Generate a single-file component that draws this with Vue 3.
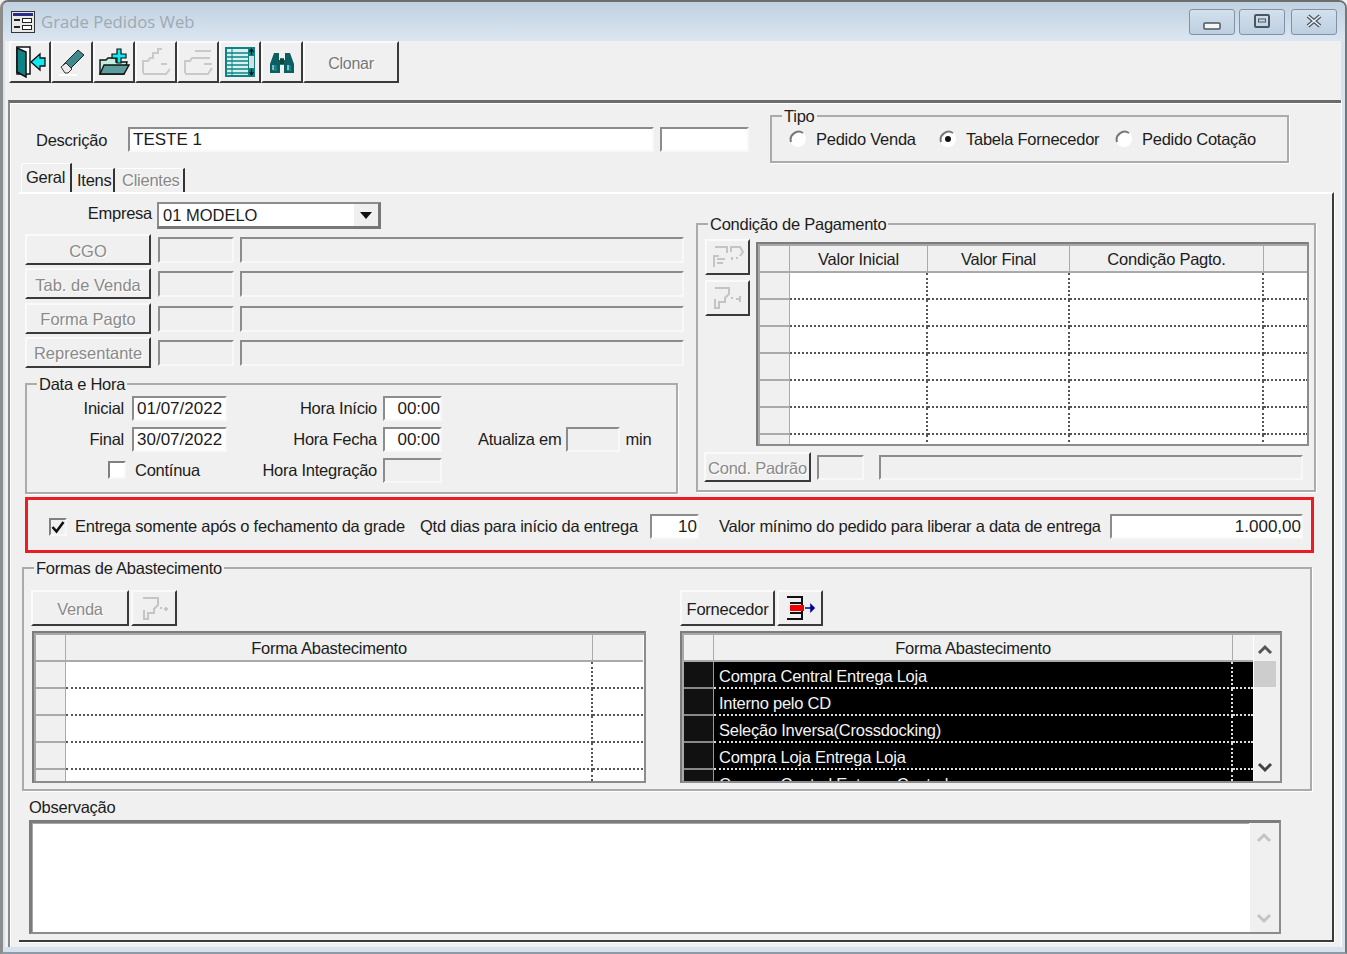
<template>
  <div class="window">
    <header class="titlebar">
      <svg class="app-icon" width="24" height="22" viewBox="0 0 24 22">
        <rect x="0.5" y="0.5" width="23" height="21" fill="#e8e8e8" stroke="#333" />
        <rect x="2" y="2" width="20" height="3" fill="#2a2a8a" />
        <path d="M3 9h6M3 16h6" stroke="#222" stroke-width="2" />
        <rect x="11.5" y="7.5" width="9" height="4" fill="#fff" stroke="#222" />
        <rect x="11.5" y="14.5" width="9" height="4" fill="#fff" stroke="#222" />
      </svg>
      <span class="title">Grade Pedidos Web</span>
      <div class="caption-buttons">
        <div class="caption-btn">
          <svg width="18" height="10" viewBox="0 0 18 10"><rect x="1" y="2" width="16" height="6" rx="1" fill="#f4f6f8" stroke="#4a5560" stroke-width="1.5" /></svg>
        </div>
        <div class="caption-btn up">
          <svg width="18" height="14" viewBox="0 0 18 14"><rect x="2" y="1" width="14" height="12" rx="1" fill="none" stroke="#4a5560" stroke-width="2" /><rect x="5.5" y="5" width="7" height="3" fill="none" stroke="#4a5560" /></svg>
        </div>
        <div class="caption-btn up close">
          <svg width="18" height="14" viewBox="0 0 18 14"><path d="M3 2l12 10M15 2L3 12" stroke="#4a5560" stroke-width="4" /><path d="M3 2l12 10M15 2L3 12" stroke="#eef2f6" stroke-width="1.6" /></svg>
        </div>
      </div>
    </header>

    <div class="client">
      <div class="toolbar">
        <button class="btn tool">
          <svg width="32" height="32" viewBox="0 0 32 32">
            <path d="M3 1h13v27H3z" fill="#fff" stroke="#111" stroke-width="1.5" />
            <path d="M3 2l9 4v25L3 26z" fill="#0f8285" stroke="#111" stroke-width="1.5" />
            <path d="M17 16l9-8v4h5v8h-5v4z" fill="#12e8f0" stroke="#111" stroke-width="1.3" />
          </svg>
        </button>
        <button class="btn tool">
          <svg width="30" height="30" viewBox="0 0 30 30">
            <path d="M6 18L21 3l6 5-15 15z" fill="#3e8a8c" stroke="#222" />
            <path d="M4 20l5-4 6 6-4 4H8z" fill="#ececec" stroke="#333" />
            <path d="M2 28h18" stroke="#fff" stroke-width="2" />
          </svg>
        </button>
        <button class="btn tool">
          <svg width="32" height="30" viewBox="0 0 32 30">
            <path d="M2 27V13h6l2-2h8v4h11l-3 12z" fill="#c4ece0" stroke="#111" stroke-width="1.4" />
            <path d="M2 27l4-9h25l-5 9z" fill="#5b9c9c" stroke="#111" stroke-width="1.4" />
            <path d="M14 7h5V2h4v5h5v4h-5v5h-4v-5h-5z" fill="#12e8f0" stroke="#111" stroke-width="1.2" />
          </svg>
        </button>
        <button class="btn tool">
          <svg width="32" height="30" viewBox="0 0 32 30">
            <path d="M3 26V14h5l2-3h3V6h5V2h4M27 17h-6M30 22l-4 5H3" fill="none" stroke="#c9c9c9" stroke-width="2" />
          </svg>
        </button>
        <button class="btn tool">
          <svg width="32" height="30" viewBox="0 0 32 30">
            <path d="M3 26V14h5l2-3h18M13 4h16M30 17h-8M30 21l-4 6H3" fill="none" stroke="#c9c9c9" stroke-width="2" />
          </svg>
        </button>
        <button class="btn tool">
          <svg width="32" height="32" viewBox="0 0 32 32">
            <rect x="1" y="1" width="30" height="30" fill="#0f8285" />
            <rect x="3" y="3" width="21" height="26" fill="#d7f1ef" />
            <path d="M3 7h21M3 11h21M3 15h21M3 19h21M3 23h21M3 27h21" stroke="#0f8285" stroke-width="1.4" />
            <path d="M8 3v26" stroke="#0f8285" />
            <rect x="25" y="10" width="5" height="12" fill="#ddd" />
            <path d="M27.5 3v6M25.5 6l2-3 2 3M27.5 23v6M25.5 26l2 3 2-3" stroke="#111" fill="none" stroke-width="1.2" />
          </svg>
        </button>
        <button class="btn tool">
          <svg width="26" height="24" viewBox="0 0 26 24">
            <path d="M5 3h5v7h1v13H1v-9zM21 3h-5v7h-1v13h10v-9z" fill="#0b5f62" />
            <path d="M11 8h4v7h-4zM4 15h4v6H4zM18 15h4v6h-4z" fill="#0f8285" />
            <path d="M11 9h4v5h-4z" fill="#143" />
            <path d="M4 15v5M19 15v5" stroke="#fff" />
          </svg>
        </button>
        <button class="btn tool clone">Clonar</button>
      </div>

      <div class="panel">
        <div class="top-row">
          <label class="desc-label">Descrição</label>
          <div class="field desc-input">TESTE 1</div>
          <div class="field desc-code"></div>
          <div class="group tipo">
            <span class="legend">Tipo</span>
            <div class="radio-row">
              <span v-for="r in tipos" :key="r.label" class="radio-item" :style="{ width: r.width + 'px' }">
                <svg width="20" height="20" viewBox="0 0 20 20">
                  <circle cx="10" cy="10" r="8" fill="#fff" />
                  <path d="M3 13A8 8 0 0 1 15 4" fill="none" stroke="#777" stroke-width="2" />
                  <circle v-if="r.checked" cx="10" cy="10" r="3" fill="#111" />
                </svg>
                <span>{{ r.label }}</span>
              </span>
            </div>
          </div>
        </div>

        <div class="tabs">
          <div class="tab active">Geral</div>
          <div class="tab tab-itens">Itens</div>
          <div class="tab tab-clientes">Clientes</div>
        </div>

        <div class="tab-page">
          <div class="upper">
            <div class="left-col">
              <div class="empresa">
                <label class="empresa-label">Empresa</label>
                <div class="field combo">
                  <span>01 MODELO</span>
                  <span class="combo-btn"><i class="arrow"></i></span>
                </div>
              </div>

              <div class="lookup-grid">
                <template v-for="name in lookups" :key="name">
                  <button class="btn off">{{ name }}</button>
                  <div class="field disabled"></div>
                  <div class="field disabled"></div>
                </template>
              </div>

              <div class="group data-hora">
                <span class="legend">Data e Hora</span>
                <div class="dh-grid">
                  <label class="right short">Inicial</label>
                  <div class="field">01/07/2022</div>
                  <label class="right">Hora Início</label>
                  <div class="field time">00:00</div>
                  <div></div>

                  <label class="right short">Final</label>
                  <div class="field">30/07/2022</div>
                  <label class="right">Hora Fecha</label>
                  <div class="field time">00:00</div>
                  <div class="atualiza">
                    <span>Atualiza em</span>
                    <div class="field disabled minutes"></div>
                    <span>min</span>
                  </div>

                  <div class="continua">
                    <span class="check"></span>
                    <span>Contínua</span>
                  </div>
                  <label class="right">Hora Integração</label>
                  <div class="field disabled"></div>
                  <div></div>
                </div>
              </div>
            </div>

            <div class="group condicao">
              <span class="legend">Condição de Pagamento</span>
              <div class="cond-main">
                <div class="cond-btns">
                  <button class="btn icon-btn">
                    <svg width="32" height="26" viewBox="0 0 32 26"><path d="M2 23V12h5M3 3h12v6M5 15h8M5 19h6M19 8V3h9l3 5-3 4M20 16v-3M24 14h2" fill="none" stroke="#c4c4c4" stroke-width="2" /></svg>
                  </button>
                  <button class="btn icon-btn">
                    <svg width="32" height="26" viewBox="0 0 32 26"><path d="M3 3h14v6l-4 4v4H7v6H3v-9M20 12v2M24 14h5M28 11v6" fill="none" stroke="#c4c4c4" stroke-width="2" /></svg>
                  </button>
                </div>
                <div class="dbgrid cond-grid">
                  <div class="grid-row head" :style="{ gridTemplateColumns: condCols }">
                    <div v-for="(c, i) in condHead" :key="i" class="cell">{{ c }}</div>
                  </div>
                  <div v-for="n in 7" :key="n" class="grid-row" :style="{ gridTemplateColumns: condCols }">
                    <div v-for="(c, i) in condHead" :key="i" class="cell"></div>
                  </div>
                </div>
              </div>
              <div class="cond-foot">
                <button class="btn off padrao">Cond. Padrão</button>
                <div class="field disabled padrao-code"></div>
                <div class="field disabled padrao-name"></div>
              </div>
            </div>
          </div>

          <div class="highlight">
            <span class="check checked">
              <svg width="14" height="14" viewBox="0 0 14 14"><path d="M1.5 7l4 4.5L12.5 2" fill="none" stroke="#111" stroke-width="2.6" /></svg>
            </span>
            <span class="hl-entrega">Entrega somente após o fechamento da grade</span>
            <span class="hl-qtd">Qtd dias para início da entrega</span>
            <div class="field num qtd">10</div>
            <span class="hl-valor">Valor mínimo do pedido para liberar a data de entrega</span>
            <div class="field num valor">1.000,00</div>
          </div>

          <div class="group formas">
            <span class="legend">Formas de Abastecimento</span>
            <div class="formas-body">
              <div class="formas-side left-side">
                <div class="formas-btns">
                  <button class="btn off venda">Venda</button>
                  <button class="btn icon-small">
                    <svg width="30" height="26" viewBox="0 0 30 26"><path d="M4 3h15v7l-4 4v4H9v6H5v-9M22 12v2M25 14h4M27 12v4" fill="none" stroke="#c4c4c4" stroke-width="2" /></svg>
                  </button>
                </div>
                <div class="dbgrid forma-grid">
                  <div class="grid-row head" :style="{ gridTemplateColumns: leftCols }">
                    <div class="cell"></div><div class="cell">Forma Abastecimento</div><div class="cell"></div>
                  </div>
                  <div v-for="n in 5" :key="n" class="grid-row" :style="{ gridTemplateColumns: leftCols }">
                    <div class="cell"></div><div class="cell"></div><div class="cell"></div>
                  </div>
                </div>
              </div>

              <div class="formas-side right-side">
                <div class="formas-btns">
                  <button class="btn fornecedor">Fornecedor</button>
                  <button class="btn icon-small">
                    <svg width="32" height="26" viewBox="0 0 32 26">
                      <path d="M3 2h15v22H3M18 2v6H6M18 24v-6H6" fill="none" stroke="#111" stroke-width="2" />
                      <rect x="6" y="10" width="14" height="6" fill="#f00000" />
                      <path d="M21 13h9M27 10l3 3-3 3z" fill="#0000a0" stroke="#0000a0" stroke-width="1.6" />
                    </svg>
                  </button>
                </div>
                <div class="dbgrid forma-grid selected">
                  <div class="grid-body">
                    <div class="grid-row head" :style="{ gridTemplateColumns: rightCols }">
                      <div class="cell"></div><div class="cell">Forma Abastecimento</div><div class="cell"></div>
                    </div>
                    <div v-for="f in formas" :key="f" class="grid-row" :style="{ gridTemplateColumns: rightCols }">
                      <div class="cell"></div><div class="cell text">{{ f }}</div><div class="cell"></div>
                    </div>
                  </div>
                  <div class="scrollbar">
                    <svg width="16" height="12" viewBox="0 0 16 12"><path d="M2 10l6-6 6 6" fill="none" stroke="#555" stroke-width="3" /></svg>
                    <div class="thumb"></div>
                    <div class="spacer"></div>
                    <svg width="16" height="12" viewBox="0 0 16 12"><path d="M2 2l6 6 6-6" fill="none" stroke="#444" stroke-width="3" /></svg>
                  </div>
                </div>
              </div>
            </div>
          </div>

          <label class="obs-label">Observação</label>
          <div class="field obs">
            <div class="obs-text"></div>
            <div class="scrollbar">
              <svg width="16" height="12" viewBox="0 0 16 12"><path d="M2 10l6-6 6 6" fill="none" stroke="#c4c4c4" stroke-width="3" /></svg>
              <div class="spacer"></div>
              <svg width="16" height="12" viewBox="0 0 16 12"><path d="M2 2l6 6 6-6" fill="none" stroke="#c4c4c4" stroke-width="3" /></svg>
            </div>
          </div>
        </div>
      </div>
    </div>
  </div>
</template>

<script setup>
const tipos = [
  { label: 'Pedido Venda', width: 150, checked: false },
  { label: 'Tabela Fornecedor', width: 176, checked: true },
  { label: 'Pedido Cotação', width: 150, checked: false },
]
const lookups = ['CGO', 'Tab. de Venda', 'Forma Pagto', 'Representante']
const condHead = ['', 'Valor Inicial', 'Valor Final', 'Condição Pagto.', '']
const condCols = '30px 138px 142px 194px 44px'
const leftCols = '30px 527px 50px'
const rightCols = '30px 519px 20px'
const formas = [
  'Compra Central Entrega Loja',
  'Interno pelo CD',
  'Seleção Inversa(Crossdocking)',
  'Compra Loja Entrega Loja',
  'Compra Central Entrega Central',
]
</script>

<style>
html, body {
  margin: 0;
  background: #f0f0f0;
}
</style>

<style scoped>
.window {
  width: 1347px;
  height: 954px;
  box-sizing: border-box;
  display: flex;
  flex-direction: column;
  padding: 0 4px 5px 2px;
  border-top: 2px solid #6e6e6e;
  border-left: 3px solid #8c8c8c;
  border-right: 2px solid #777;
  border-bottom: 2px solid #8f9aa5;
  border-radius: 8px 8px 0 0;
  background: #d6e3ef;
  font-family: "Liberation Sans", Arial, sans-serif;
  font-size: 16.5px;
  letter-spacing: -0.25px;
  color: #1c1c1c;
  overflow: hidden;
}

.titlebar {
  height: 39px;
  flex: none;
  display: flex;
  align-items: center;
  margin: 0 -4px 0 -2px;
  padding: 0 8px;
  background: linear-gradient(#c0d1e1, #dbe6f1);
}
.title {
  margin-left: 6px;
  font-family: "Open Sans", sans-serif;
  font-size: 16.7px;
  letter-spacing: 0;
  color: #9ea9b3;
}
.caption-buttons {
  margin-left: auto;
  display: flex;
  gap: 4px;
}
.caption-btn {
  width: 46px;
  height: 26px;
  border: 1px solid #7f92a6;
  border-radius: 3px;
  box-sizing: border-box;
  display: flex;
  align-items: flex-end;
  justify-content: center;
  padding-bottom: 3px;
  background: linear-gradient(#d4e0ec, #bccfe1);
}
.caption-btn.up {
  align-items: center;
  padding-bottom: 2px;
}
.caption-btn.close {
  margin-left: 2px;
}

.client {
  flex: 1;
  min-height: 0;
  display: flex;
  flex-direction: column;
  background: #f0f0f0;
}
.toolbar {
  display: flex;
  height: 43px;
  padding-left: 4px;
  flex: none;
}
.btn {
  box-sizing: border-box;
  margin: 0;
  padding: 0;
  font: inherit;
  letter-spacing: inherit;
  color: inherit;
  background: #f0f0f0;
  border: 2px solid;
  border-color: #fafafa #3a3a3a #3a3a3a #fafafa;
  display: flex;
  align-items: center;
  justify-content: center;
}
.tool {
  width: 42px;
  height: 42px;
}
.clone {
  width: 96px;
  padding-top: 3px;
  color: #777;
  font-size: 16px;
  text-shadow: 1px 1px 0 #fff;
}
.off {
  padding-top: 3px;
  color: #8a8a8a;
  text-shadow: 1px 1px 0 #fff;
}

.panel {
  flex: 1;
  min-height: 0;
  margin: 16px 0 0 3px;
  border-top: 3px solid #6c6c6c;
  border-left: 2px solid #8a8a8a;
  box-shadow: inset 1px 1px 0 #fff, 1px 0 0 #fff;
  display: flex;
  flex-direction: column;
  padding-left: 9px;
}
.top-row {
  height: 60px;
  flex: none;
  display: flex;
  align-items: flex-start;
}
.desc-label {
  width: 109px;
  margin-top: 28px;
  padding-left: 17px;
  box-sizing: border-box;
}
.field {
  box-sizing: border-box;
  height: 25px;
  padding: 0 3px;
  display: flex;
  align-items: center;
  background: #fff;
  border: 2px solid;
  border-color: #8c8c8c #f8f8f8 #f8f8f8 #8c8c8c;
  white-space: nowrap;
  line-height: 1;
  font-size: 17px;
  letter-spacing: 0;
}
.disabled {
  background: #f0f0f0;
}
.desc-input {
  width: 526px;
  margin-top: 24px;
}
.desc-code {
  width: 89px;
  margin: 24px 0 0 6px;
}

.group {
  position: relative;
  box-sizing: border-box;
  border: 2px solid #ababab;
  box-shadow: 1px 1px 0 #fff;
}
.legend {
  position: absolute;
  top: -11px;
  left: 10px;
  padding: 0 2px;
  background: #f0f0f0;
  line-height: 20px;
  white-space: nowrap;
}
.tipo {
  width: 519px;
  height: 48px;
  margin: 12px 0 0 21px;
}
.radio-row {
  display: flex;
  padding: 12px 0 0 16px;
}
.radio-item {
  display: flex;
  align-items: center;
  gap: 8px;
  white-space: nowrap;
  overflow: hidden;
}

.tabs {
  height: 29px;
  flex: none;
  display: flex;
  align-items: flex-end;
  padding-left: 2px;
}
.tab {
  height: 24px;
  line-height: 23px;
  box-sizing: border-box;
  padding: 0 3px;
  border-right: 2px solid #333;
  border-top: 1px solid #fff;
  margin-right: 2px;
}
.active {
  height: 29px;
  line-height: 27px;
  padding: 0 4px;
  border-left: 1px solid #fff;
  border-radius: 3px 0 0 0;
  width: 51px;
}
.tab-itens {
  width: 41px;
}
.tab-clientes {
  width: 68px;
  color: #888;
  text-shadow: 1px 1px 0 #fff;
  padding-left: 5px;
}

.tab-page {
  flex: 1;
  min-height: 0;
  width: 1315px;
  margin-bottom: 5px;
  box-sizing: border-box;
  border-top: 2px solid #fff;
  border-right: 2px solid #3a3a3a;
  border-bottom: 2px solid #3a3a3a;
  padding: 8px 0 0 6px;
  box-shadow: 1px 0 0 #fff, 0 1px 0 #fff;
}
.upper {
  display: flex;
  gap: 12px;
  height: 290px;
}
.left-col {
  width: 659px;
}
.empresa {
  display: flex;
  align-items: flex-start;
  height: 32px;
}
.empresa-label {
  width: 127px;
  padding-top: 2px;
  text-align: right;
}
.combo {
  width: 224px;
  height: 27px;
  margin-left: 5px;
  justify-content: space-between;
  padding: 0 0 0 4px;
  border-color: #8c8c8c #777 #777 #8c8c8c;
  border-width: 2px 3px 3px 2px;
  font-size: 16.5px;
}
.combo-btn {
  width: 24px;
  height: 100%;
  background: #f0f0f0;
  border-left: 1px solid #fff;
  display: flex;
  align-items: center;
  justify-content: center;
}
.arrow {
  width: 0;
  height: 0;
  border: 6px solid transparent;
  border-top: 7px solid #111;
  border-bottom: 0;
}
.lookup-grid {
  display: grid;
  grid-template-columns: 127px 76px 444px;
  grid-auto-rows: 31px;
  column-gap: 6px;
  row-gap: 3.3px;
}
.lookup-grid .field {
  height: 26px;
  margin-top: 3px;
}
.lookup-grid .btn {
  width: 126px;
  white-space: nowrap;
  letter-spacing: 0;
}
.data-hora {
  width: 653px;
  height: 111px;
  margin: 15px 0 0 0;
}
.dh-grid {
  display: grid;
  grid-template-columns: 105px 95px 156px 59px 1fr;
  grid-auto-rows: 25px;
  row-gap: 6px;
  padding-top: 11px;
  align-items: center;
}
.right {
  text-align: right;
  white-space: nowrap;
  padding-right: 6px;
}
.right.short {
  padding-right: 8px;
}
.time {
  justify-content: flex-end;
  padding-right: 0;
}
.continua {
  grid-column: 1 / 3;
  display: flex;
  align-items: center;
  gap: 9px;
  padding-left: 81px;
}
.check {
  box-sizing: border-box;
  width: 18px;
  height: 18px;
  background: #fff;
  border: 2px solid;
  border-color: #808080 #f8f8f8 #f8f8f8 #808080;
  display: inline-flex;
  align-items: center;
  justify-content: center;
  flex: none;
}
.atualiza {
  display: flex;
  align-items: center;
  padding-left: 36px;
  white-space: nowrap;
}
.minutes {
  width: 54px;
  margin: 0 5px;
  flex: none;
}

.condicao {
  width: 620px;
  height: 269px;
  margin-top: 21px;
  padding: 14px 0 0 7px;
}
.cond-main {
  display: flex;
  gap: 6px;
  height: 213px;
}
.cond-btns {
  display: flex;
  flex-direction: column;
  gap: 5px;
}
.icon-btn {
  width: 45px;
  height: 36px;
}
.dbgrid {
  box-sizing: border-box;
  border: 2px solid;
  border-color: #7c7c7c #8c8c8c #8c8c8c #7c7c7c;
  box-shadow: inset 2px 2px 0 #a8a8a8;
  background: #fff;
  overflow: hidden;
  padding: 2px 0 0 2px;
}
.cond-grid {
  width: 553px;
  height: 204px;
  margin-top: 3px;
}
.grid-row {
  display: grid;
  height: 27px;
}
.cell {
  box-sizing: border-box;
  border-right: 2px dotted #555;
  border-bottom: 2px dotted #555;
  white-space: nowrap;
  overflow: hidden;
}
.cell:first-child {
  background: #f0f0f0;
  border-right: 1px solid #aaa;
  border-bottom: 2px solid #aaa;
}
.cell:last-child {
  border-right: none;
}
.head .cell {
  background: #f0f0f0;
  border-right: 1px solid #aaa;
  border-bottom: 2px solid #aaa;
  text-align: center;
  line-height: 27px;
}
.head .cell:last-child {
  border-right: none;
}
.cond-foot {
  display: flex;
  align-items: center;
  margin-left: -1px;
}
.padrao {
  width: 107px;
  height: 30px;
  white-space: nowrap;
}
.padrao-code {
  width: 47px;
  margin-left: 6px;
}
.padrao-name {
  width: 424px;
  margin-left: 15px;
}

.highlight {
  box-sizing: border-box;
  width: 1289px;
  height: 56px;
  margin-top: 5px;
  border: 3px solid #ed1c24;
  display: flex;
  align-items: center;
  padding: 3px 0 0 21px;
  white-space: nowrap;
}
.checked {
  background: #f0f0f0;
}
.hl-entrega {
  width: 329px;
  margin-left: 8px;
}
.hl-qtd {
  width: 220px;
  margin-left: 16px;
}
.qtd {
  width: 49px;
  margin-left: 10px;
}
.num {
  justify-content: flex-end;
  padding-right: 0;
}
.hl-valor {
  width: 381px;
  margin-left: 20px;
}
.valor {
  width: 193px;
  margin-left: 10px;
}

.formas {
  width: 1290px;
  height: 224px;
  margin: 14px 0 0 -3px;
}
.formas-body {
  display: flex;
  padding: 21px 0 0 7px;
}
.formas-side {
  display: flex;
  flex-direction: column;
}
.left-side {
  width: 649px;
}
.formas-btns {
  display: flex;
  height: 41px;
  gap: 2px;
}
.venda {
  width: 98px;
  height: 36px;
}
.fornecedor {
  width: 95px;
  height: 36px;
  padding-top: 3px;
}
.icon-small {
  width: 46px;
  height: 36px;
}
.forma-grid {
  width: 614px;
  height: 152px;
}
.left-side .forma-grid {
  margin-left: 1px;
}
.selected {
  width: 602px;
  display: flex;
}
.grid-body {
  width: 569px;
  flex: none;
  background: #000;
  overflow: hidden;
}
.selected .grid-row:not(.head) .cell {
  background: #000;
  color: #f4f4f4;
  border-color: #ddd;
  line-height: 28px;
}
.selected .grid-row:not(.head) .cell:first-child {
  background: #111;
  border-right: 1px solid #999;
  border-bottom: 2px solid #888;
}
.selected .text {
  padding-left: 5px;
}
.scrollbar {
  flex: 1;
  display: flex;
  flex-direction: column;
  align-items: center;
  background: #f0f0f0;
  border-left: 1px solid #fff;
  padding: 8px 4px 7px 0;
}
.thumb {
  width: 22px;
  height: 26px;
  margin-top: 6px;
  background: #cdcdcd;
}
.spacer {
  flex: 1;
}

.obs-label {
  display: block;
  margin: 6px 0 3px 4px;
  line-height: 20px;
}
.obs {
  width: 1252px;
  height: 114px;
  margin-left: 4px;
  padding: 0;
  align-items: stretch;
  border-width: 3px 2px 2px 3px;
  border-color: #7c7c7c #8c8c8c #8c8c8c #7c7c7c;
  box-shadow: inset 1px 1px 0 #a8a8a8;
}
.obs-text {
  flex: 1;
}
.obs .scrollbar {
  flex: none;
  width: 27px;
  padding-right: 2px;
}
</style>
